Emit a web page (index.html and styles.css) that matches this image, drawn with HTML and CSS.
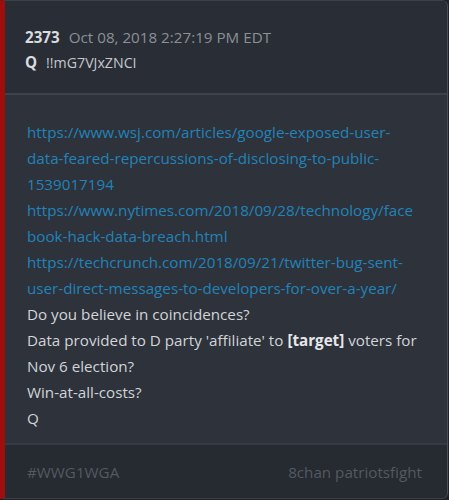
FILE: index.html
```html
<!DOCTYPE html>
<html>
<head>
<meta charset="utf-8">
<link rel="stylesheet" href="styles.css">
</head>
<body>
<div class="card">
  <div class="head">
    <div class="row"><span class="num">2373</span><span class="date">Oct 08, 2018 2:27:19 PM EDT</span></div>
    <div class="row"><span class="q">Q</span><span class="trip">!!mG7VJxZNCI</span></div>
  </div>
  <div class="body">
    <a class="link">https://www.wsj.com/articles/google-exposed-user-data-feared-repercussions-of-disclosing-to-public-1539017194</a>
    <a class="link">https://www.nytimes.com/2018/09/28/technology/facebook-hack-data-breach.html</a>
    <a class="link">https://techcrunch.com/2018/09/21/twitter-bug-sent-user-direct-messages-to-developers-for-over-a-year/</a>
    <p>Do you believe in coincidences?</p>
    <p>Data provided to D party 'affiliate' to <b>[target]</b> voters for Nov 6 election?</p>
    <p>Win-at-all-costs?</p>
    <p>Q</p>
  </div>
  <div class="foot">
    <span>#WWG1WGA</span>
    <span>8chan patriotsfight</span>
  </div>
</div>
</body>
</html>
```
FILE: styles.css
```css
html, body {
  margin: 0;
  padding: 0;
  background: #1f2228;
}
body {
  font-family: "Open Sans", sans-serif;
  font-size: 15.2px;
  width: 449px;
  height: 500px;
  overflow: hidden;
}
.card {
  box-sizing: border-box;
  width: 448px;
  height: 499px;
  border-left: 5px solid #a00d0d;
  border-right: 1px solid #4a4f57;
  border-top: 1px solid #3c4048;
  border-bottom: 1px solid #3c4048;
  border-radius: 0 6px 6px 0;
  background: #2d323b;
  display: flex;
  flex-direction: column;
  overflow: hidden;
}
.head {
  background: #292d35;
  height: 94px;
  box-sizing: border-box;
  padding: 26px 0 0 20px;
  border-bottom: 2px solid #3d424b;
  display: flex;
  flex-direction: column;
  gap: 5px;
}
.row {
  display: flex;
  align-items: baseline;
  line-height: 20px;
}
.num {
  color: #d9dbde;
  font-weight: 700;
  margin-right: 9px;
}
.date {
  color: #8b9097;
}
.q {
  color: #d9dbde;
  font-weight: 700;
  margin-right: 9px;
}
.trip {
  color: #c5c8cc;
  font-size: 14.2px;
}
.body {
  flex: 1;
  padding: 24px 27px 0 22px;
  line-height: 26px;
  color: #d2d4d8;
}
.body p {
  margin: 0;
}
.body b {
  color: #e6e7e9;
}
.link {
  display: block;
  color: #2383b8;
  overflow-wrap: break-word;
}
.foot {
  background: #262a31;
  border-top: 2px solid #363b43;
  height: 55px;
  box-sizing: border-box;
  display: flex;
  justify-content: space-between;
  align-items: center;
  padding: 0 25px 0 22px;
  color: #545962;
}
```
